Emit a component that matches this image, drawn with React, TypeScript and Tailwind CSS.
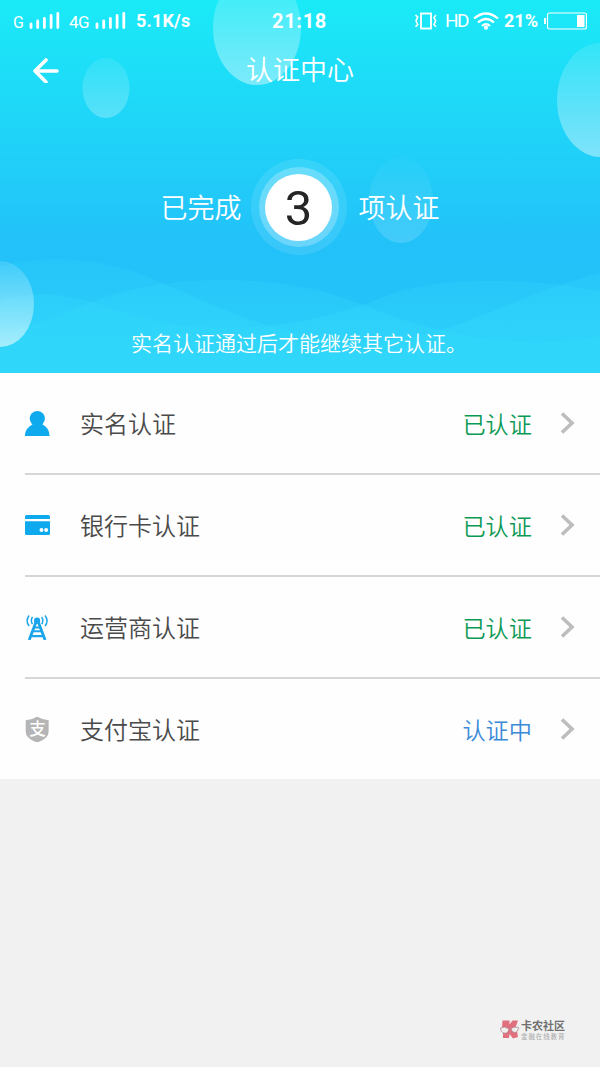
/**
 * @file App.tsx
 * @description 认证中心页面
 *
 * - 顶部：状态栏 + 标题 + 已完成数量
 * - 中部：认证项目列表
 * - 底部：社区标识
 */

import type { ReactNode } from "react";

type AuthItem = {
  name: string;
  status: string;
  done: boolean;
  icon: ReactNode;
};

function UserIcon() {
  return (
    <svg className="mt-px h-[25px] w-[25px]" viewBox="0 0 25 25" fill="#0fa9ee">
      <circle cx="12.300" cy="7.600" r="7.600" />
      <path d="M0 25C0 19.500 3 15.800 7.500 13.500L7 11h11l-.5 2.500C22 15.800 24.500 19.500 24.500 25z" />
    </svg>
  );
}

function CardIcon() {
  return (
    <svg className="h-6 w-[25px]" viewBox="0 0 24 24" preserveAspectRatio="none" fill="#0fa9ee">
      <path d="M0 6V3.500Q0 2 1.500 2h21Q24 2 24 3.500V6z" />
      <path d="M0 8.200h24v12.300q0 1.500-1.500 1.500h-21Q0 22 0 20.500z" />
      <circle cx="15.800" cy="17" r="1.900" fill="#fff" />
      <circle cx="20.300" cy="17" r="1.900" fill="#fff" />
    </svg>
  );
}

function TowerIcon() {
  return (
    <svg className="h-[25px] w-[25px]" viewBox="0 0 24 24" fill="none" stroke="#1ba5ea">
      <circle cx="11.600" cy="5.500" r="3" fill="#1ba5ea" stroke="none" />
      <path d="M11 5.500L4 24M12.300 5.500l7 18.500" strokeWidth="2.700" />
      <path d="M9 12h6M7.500 15.600h9M5.500 20.300h13" strokeWidth="2" />
      <path d="M7.200 1.800q-2.200 3.500 0 7M4 .5q-4 5 0 10M16 1.800q2.200 3.500 0 7M19.200 .5q4 5 0 10" strokeWidth="1.400" />
    </svg>
  );
}

function AlipayIcon() {
  return (
    <svg className="h-[25px] w-[25px]" viewBox="0 0 24 24">
      <path d="M11.700 -.5Q17 3 22.700 3.200V14q0 7-11 10.500Q.7 21 .7 14V3.200Q6.500 3 11.700-.5z" fill="#b5b5b5" />
      <text
        x="12"
        y="17.200"
        textAnchor="middle"
        fontSize="16"
        fontWeight="500"
        fill="#fff"
        fontFamily="'Noto Sans CJK SC', sans-serif"
      >
        支
      </text>
    </svg>
  );
}

function Signal() {
  return (
    <svg className="h-[19px] w-[31px]" viewBox="0 0 31 19" stroke="#fff" strokeWidth="2.800" strokeLinecap="round">
      <path d="M2 16.500v-3.500M8.700 16.500v-6.500M15.400 16.500v-9M22.100 16.500v-12M28.800 16.500v-14" />
    </svg>
  );
}

const items: AuthItem[] = [
  { name: "实名认证", status: "已认证", done: true, icon: <UserIcon /> },
  { name: "银行卡认证", status: "已认证", done: true, icon: <CardIcon /> },
  { name: "运营商认证", status: "已认证", done: true, icon: <TowerIcon /> },
  { name: "支付宝认证", status: "认证中", done: false, icon: <AlipayIcon /> },
];

// 气泡与波浪背景
function HeaderBackground() {
  return (
    <svg className="absolute inset-0 h-full w-full" viewBox="0 0 600 373" preserveAspectRatio="none">
      <defs>
        <linearGradient id="sky" x1="0" y1="0" x2="0" y2="1">
          <stop offset="0" stopColor="#1aeaf7" />
          <stop offset=".33" stopColor="#1fd5f8" />
          <stop offset=".66" stopColor="#23c1f9" />
          <stop offset="1" stopColor="#25c5f9" />
        </linearGradient>
        <linearGradient id="bubble" x1="0" y1="0" x2="0" y2="1">
          <stop offset="0" stopColor="#fff" stopOpacity=".1" />
          <stop offset="1" stopColor="#fff" stopOpacity=".42" />
        </linearGradient>
        <linearGradient id="bubbleLeft" x1="0" y1="0" x2="0" y2="1">
          <stop offset="0" stopColor="#fff" stopOpacity=".12" />
          <stop offset="1" stopColor="#fff" stopOpacity=".56" />
        </linearGradient>
        <linearGradient id="bubbleSoft" x1="0" y1="0" x2="0" y2="1">
          <stop offset="0" stopColor="#fff" stopOpacity=".08" />
          <stop offset="1" stopColor="#fff" stopOpacity=".26" />
        </linearGradient>
        <linearGradient id="bubbleFaint" x1="0" y1="0" x2="0" y2="1">
          <stop offset="0" stopColor="#fff" stopOpacity=".02" />
          <stop offset="1" stopColor="#fff" stopOpacity=".15" />
        </linearGradient>
        <linearGradient id="wave" gradientUnits="userSpaceOnUse" x1="0" y1="255" x2="0" y2="345">
          <stop offset="0" stopColor="#32d8fb" stopOpacity=".16" />
          <stop offset="1" stopColor="#32d8fb" stopOpacity=".5" />
        </linearGradient>
      </defs>
      <rect width="600" height="373" fill="url(#sky)" />
      <path d="M0 266C60 252 110 260 165 284C240 318 300 342 365 342C450 342 500 300 600 273V373H0z" fill="url(#wave)" />
      <path d="M0 332C40 325 65 314 90 303C145 279 265 265 365 306C420 328 510 355 600 336V373H0z" fill="url(#wave)" />
      <path d="M0 302C30 290 65 294 90 302C140 319 175 328 225 328C300 328 350 310 390 295C440 276 530 278 600 291V373H0z" fill="url(#wave)" />
      <ellipse cx="257" cy="28" rx="44" ry="57" fill="url(#bubble)" />
      <ellipse cx="106" cy="88" rx="23.500" ry="30" fill="url(#bubbleSoft)" />
      <ellipse cx="601" cy="100" rx="44" ry="57" fill="url(#bubble)" />
      <ellipse cx="401" cy="200" rx="32" ry="43" fill="url(#bubbleFaint)" />
      <ellipse cx="0" cy="304" rx="34" ry="43" fill="url(#bubbleLeft)" />
    </svg>
  );
}

function StatusBar() {
  return (
    <div className="flex h-[41px] items-center pl-[13px] pr-[13px] font-['Roboto','Liberation_Sans',sans-serif] text-lg text-white">
      <span className="w-[16px] pt-1 text-base font-normal">G</span>
      <Signal />
      <span className="ml-[9px] w-[26px] pt-1 text-[17px] font-normal tracking-[-0.500px]">4G</span>
      <Signal />
      <span className="ml-[10px] w-[136px] font-bold tracking-[0.200px]">5.1K/s</span>
      <span className="w-[143px] text-xl font-bold tracking-[0.700px]">21:18</span>
      <svg className="h-[18px] w-[22px]" viewBox="0 0 22 18" fill="none" stroke="#fff" strokeWidth="1.600">
        <rect x="6" y="1.500" width="10" height="15" strokeWidth="1.900" />
        <path d="M.5 3l2.200 2L1 8.800l1.700 3.700-2.200 2.200M21 3l-2 2.500 1.700 3.300L19 12.500l2 2.200" />
      </svg>
      <span className="ml-[8px] w-[28px] text-[19px] font-normal tracking-[-1.500px]">HD</span>
      <svg className="h-[18px] w-[26px]" viewBox="0 0 26 18" fill="none" stroke="#fff" strokeWidth="2.200">
        <path d="M1 6.500Q13-3.500 25 6.500M5 10.500Q13 3.500 21 10.500M9 14Q13 10.300 17 14" />
        <circle cx="13" cy="15.700" r="2.100" fill="#fff" stroke="none" />
      </svg>
      <span className="ml-[5px] w-[40px] text-lg font-bold">21%</span>
      <svg className="h-[18px] w-[43px] shrink-0" viewBox="0 0 43 18" fill="none" stroke="#fff">
        <rect x="3.500" y="1" width="39" height="16" rx="2" strokeWidth="1.200" />
        <path d="M1 6v6" strokeWidth="2" />
        <rect x="33" y="3" width="7.500" height="12" fill="#fff" stroke="none" />
      </svg>
    </div>
  );
}

export default function App() {
  return (
    <div className="flex h-[1067px] w-[600px] flex-col overflow-hidden bg-[#f1f1f1] font-['Noto_Sans_CJK_SC',sans-serif]">
      <header className="relative h-[373px] shrink-0 text-white">
        <HeaderBackground />
        <div className="relative flex h-full flex-col">
          <StatusBar />
          {/* 标题栏 */}
          <div className="flex h-[58px] items-center">
            <button type="button" aria-label="返回" className="ml-[33px] w-[213px]">
              <svg className="h-[26px] w-[26px]" viewBox="0 0 26 26" fill="none" stroke="#fff" strokeWidth="3.600" strokeLinecap="round" strokeLinejoin="round">
                <path d="M13 3L2 14l11 11M2 14h22" />
              </svg>
            </button>
            <h1 className="pb-[4px] text-[27px] font-[350] leading-none">认证中心</h1>
          </div>
          {/* 已完成数量 */}
          <div className="flex h-[216px] items-center justify-center text-[27px] font-[350] leading-none">
            <span className="pb-[2px]">已完成</span>
            <div className="ml-[9px] mr-[12px] flex size-24 items-center justify-center rounded-full bg-white/10">
              <div className="flex size-20 items-center justify-center rounded-full bg-white/25">
                <div className="flex size-[67px] items-center justify-center rounded-full bg-white pt-[2px] font-['Roboto',sans-serif] text-[49px] font-normal text-[#252525]">
                  3
                </div>
              </div>
            </div>
            <span className="pb-[2px]">项认证</span>
          </div>
          <p className="ml-[131px] mt-[15px] whitespace-nowrap text-[21px] font-[350] leading-6">
            实名认证通过后才能继续其它认证。
          </p>
        </div>
      </header>

      {/* 认证列表 */}
      <ul className="h-[406px] shrink-0 bg-[#fefefe] pl-[25px]">
        {items.map((item) => (
          <li
            key={item.name}
            className="flex h-[102px] items-center border-b-2 border-[#d6d6d6] pr-[25px] last:h-[100px] last:border-b-0"
          >
            {item.icon}
            <span className="ml-[30px] flex-1 text-2xl font-[350] text-[#4a4a4a]">{item.name}</span>
            <span className={`mr-[28px] text-[23.200px] font-[350] ${item.done ? "text-[#0a9a55]" : "text-[#3a8ad8]"}`}>
              {item.status}
            </span>
            <svg className="h-[22px] w-[15px]" viewBox="0 0 15 22" fill="none" stroke="#bdbdbd" strokeWidth="3.600">
              <path d="M2 1.500L12 11 2 20.500" />
            </svg>
          </li>
        ))}
      </ul>

      {/* 社区标识 */}
      <footer className="ml-[500px] mt-auto mb-[27px] flex items-center gap-[2px]">
        <svg className="h-[21px] w-[19px]" viewBox="0 0 19 21">
          <path d="M2.500 1.500h7v4l3-4h5.500l-2.500 7 1.500 3.500 1 6-5 1.500-3.500-4.500-.5 4H3V13L2 8z" fill="#e0707d" />
          <path d="M.5 9q4-2.500 8.500 1-1 5-5 4-3 0-3.500-5M11 9.500q3.500-2.500 7.500-1-.5 5-4 5-3-.5-3.500-4z" fill="#f2eeee" stroke="#a38088" strokeWidth=".7" />
        </svg>
        <div className="flex flex-col whitespace-nowrap">
          <span className="text-[11px] font-bold leading-[11px] text-[#707070]">卡农社区</span>
          <span className="mt-[2px] text-[6.500px] font-medium leading-[7px] tracking-[0.900px] text-[#b0b0b0]">金融在线教育</span>
        </div>
      </footer>
    </div>
  );
}
